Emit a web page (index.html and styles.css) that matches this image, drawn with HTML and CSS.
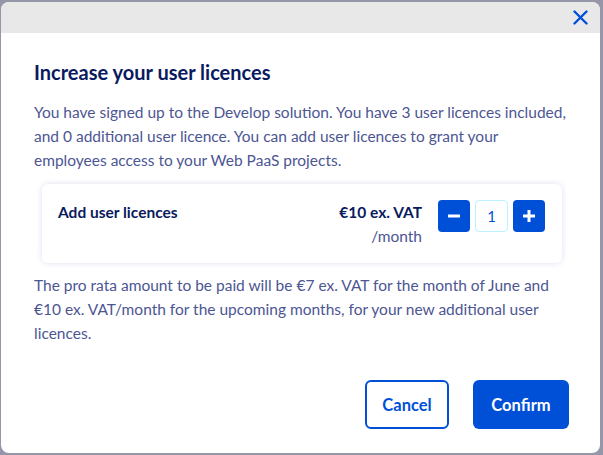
FILE: index.html
```html
<!DOCTYPE html>
<html lang="en">
<head>
<meta charset="utf-8">
<title>Increase your user licences</title>
<link rel="stylesheet" href="styles.css">
</head>
<body>
<div class="modal">
  <div class="modal-header">
    <button class="close" aria-label="Close">
      <svg width="15" height="15" viewBox="0 0 15 15"><path d="M1.5 1.5 L13.5 13.5 M13.5 1.5 L1.5 13.5" stroke="#0050d7" stroke-width="2.4" stroke-linecap="round" fill="none"/></svg>
    </button>
  </div>
  <div class="modal-body">
    <h2 class="title">Increase your user licences</h2>
    <p class="text">You have signed up to the Develop solution. You have 3 user licences included, and 0 additional user licence. You can add user licences to grant your employees access to your Web PaaS projects.</p>
    <div class="card">
      <div class="card-label">Add user licences</div>
      <div class="price">
        <div class="price-main">€10 ex. VAT</div>
        <div class="price-sub">/month</div>
      </div>
      <div class="stepper">
        <button class="step-btn" aria-label="Decrease">
          <svg width="14" height="14" viewBox="0 0 14 14"><rect x="1" y="5.5" width="12" height="3" fill="#fff"/></svg>
        </button>
        <div class="step-value">1</div>
        <button class="step-btn" aria-label="Increase">
          <svg width="14" height="14" viewBox="0 0 14 14"><rect x="1" y="5.5" width="12" height="3" fill="#fff"/><rect x="5.5" y="1" width="3" height="12" fill="#fff"/></svg>
        </button>
      </div>
    </div>
    <p class="text text-after-card">The pro rata amount to be paid will be €7 ex. VAT for the month of June and €10 ex. VAT/month for the upcoming months, for your new additional user licences.</p>
    <div class="actions">
      <button class="btn btn-outline">Cancel</button>
      <button class="btn btn-primary">Confirm</button>
    </div>
  </div>
</div>
</body>
</html>
```
FILE: styles.css
```css
html, body {
  margin: 0;
  padding: 0;
}
body {
  background: #9596a8;
  height: 455px;
  overflow: hidden;
  font-family: Lato, "Open Sans", sans-serif;
  padding-top: 2px;
  padding-left: 1px;
  box-sizing: border-box;
}
.modal {
  width: 599px;
  height: 451px;
  background: #fff;
  border-radius: 8px;
  overflow: hidden;
  display: flex;
  flex-direction: column;
}
.modal-header {
  height: 31px;
  background: #e8e8e8;
  display: flex;
  justify-content: flex-end;
  align-items: center;
  padding-right: 12px;
  flex-shrink: 0;
}
.close {
  border: 0;
  background: none;
  padding: 0;
  width: 16px;
  height: 16px;
  display: flex;
  align-items: center;
  justify-content: center;
}
.modal-body {
  padding: 27px 31px 0 33px;
}
.title {
  margin: 0;
  font-size: 20px;
  line-height: 24px;
  font-weight: 700;
  color: #0a1a5e;
}
.text {
  margin: 16px 0 0;
  font-size: 15.5px;
  line-height: 24px;
  color: #4d5693;
}
.card {
  margin: 12px 7px 0 8px;
  padding: 16px 17px 15px 16px;
  border-radius: 6px;
  box-shadow: 0 0 6px rgba(0, 14, 156, 0.13);
  display: flex;
  align-items: flex-start;
}
.text-after-card {
  margin-top: 10px;
}
.card-label {
  flex: 1;
  font-weight: 700;
  font-size: 15.5px;
  line-height: 24px;
  color: #0a1a5e;
}
.price {
  text-align: right;
  font-size: 15.5px;
  line-height: 24px;
  margin-right: 16px;
}
.price-main {
  font-weight: 700;
  color: #0a1a5e;
}
.price-sub {
  color: #4d5693;
}
.stepper {
  display: flex;
  gap: 5px;
}
.step-btn {
  width: 32px;
  height: 32px;
  border: 0;
  border-radius: 4px;
  background: #0050d7;
  padding: 0;
  display: flex;
  align-items: center;
  justify-content: center;
}
.step-value {
  width: 33px;
  height: 32px;
  box-sizing: border-box;
  border: 1px solid #bef1ff;
  border-radius: 4px;
  display: flex;
  align-items: center;
  justify-content: center;
  color: #0050d7;
  font-size: 15px;
}
.actions {
  display: flex;
  justify-content: flex-end;
  gap: 24px;
  margin-top: 35px;
}
.btn {
  height: 49px;
  border-radius: 6px;
  font-family: Lato, "Open Sans", sans-serif;
  font-size: 16.5px;
  font-weight: 700;
  box-sizing: border-box;
}
.btn-outline {
  width: 84px;
  background: #fff;
  border: 2px solid #0050d7;
  color: #0050d7;
}
.btn-primary {
  width: 96px;
  background: #0050d7;
  border: 0;
  color: #fff;
}
```
